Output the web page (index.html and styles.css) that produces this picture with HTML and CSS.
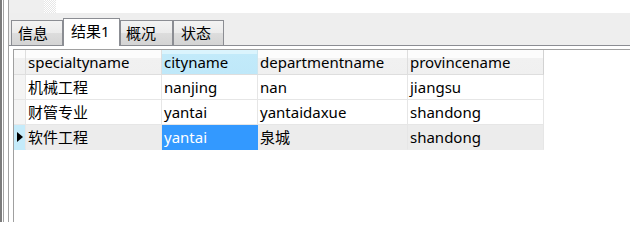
FILE: index.html
```html
<!DOCTYPE html>
<html>
<head>
<meta charset="utf-8">
<link rel="stylesheet" href="styles.css">
</head>
<body>
<div class="frame">
  <div class="rail rail-dark"></div>
  <div class="rail-gap"></div>
  <div class="rail rail-light"></div>
  <div class="rail-gap2"></div>
  <div class="rail rail-light"></div>
  <div class="main">
    <div class="topstrip"><div class="topbox"></div><div class="checker"></div></div>
    <div class="tabbar">
      <div class="tab w1">信息</div>
      <div class="tab active w2">结果1</div>
      <div class="tab w3">概况</div>
      <div class="tab w4">状态</div>
    </div>
    <div class="spacer"></div>
    <div class="gridwrap">
      <div class="grid">
        <div class="row head">
          <div class="cell ind"></div>
          <div class="cell c1">specialtyname</div>
          <div class="cell c2 hsel">cityname</div>
          <div class="cell c3">departmentname</div>
          <div class="cell c4">provincename</div>
        </div>
        <div class="row">
          <div class="cell ind"></div>
          <div class="cell c1">机械工程</div>
          <div class="cell c2">nanjing</div>
          <div class="cell c3">nan</div>
          <div class="cell c4">jiangsu</div>
        </div>
        <div class="row">
          <div class="cell ind"></div>
          <div class="cell c1">财管专业</div>
          <div class="cell c2">yantai</div>
          <div class="cell c3">yantaidaxue</div>
          <div class="cell c4">shandong</div>
        </div>
        <div class="row current">
          <div class="cell ind cur"><span class="arrow"></span></div>
          <div class="cell c1">软件工程</div>
          <div class="cell c2 sel">yantai</div>
          <div class="cell c3">泉城</div>
          <div class="cell c4">shandong</div>
        </div>
      </div>
    </div>
  </div>
</div>
</body>
</html>
```

FILE: styles.css
```css
html, body {
  margin: 0;
  padding: 0;
  background: #ffffff;
}
body {
  font-family: "Noto Sans", "Noto Sans CJK SC", sans-serif;
  font-size: 15px;
  color: #000;
}
.frame {
  display: flex;
  height: 222px;
  width: 630px;
  overflow: hidden;
}
.rail { flex: 0 0 auto; }
.rail-dark { width: 2px; background: #7b7b7b; }
.rail-gap { width: 1px; }
.rail-light { width: 1px; background: #a3a3a3; }
.rail-gap2 { width: 4px; }
.main {
  flex: 1;
  display: flex;
  flex-direction: column;
  min-width: 0;
}
.topstrip {
  height: 13px;
  display: flex;
}
.topbox { width: 35px; background: #efefef; }
.checker {
  width: 12px;
  background: repeating-conic-gradient(#e6e6e6 0 25%, #ffffff 0 50%) 0 0 / 2px 2px;
}
.tabbar {
  height: 32px;
  background: #eeeeee;
  border-bottom: 1px solid #8b8d93;
  display: flex;
  align-items: flex-end;
  padding-left: 2px;
}
.tab {
  box-sizing: border-box;
  height: 25px;
  border: 1px solid #8b8d93;
  border-bottom: none;
  padding-left: 6px;
  line-height: 24px;
  background: linear-gradient(#f3f3f3, #ebebeb 50%, #dddddd 50%, #d4d4d4);
  white-space: nowrap;
}
.tab.active {
  height: 28px;
  margin-bottom: -1px;
  background: #ffffff;
  line-height: 25px;
  padding-left: 7px;
  position: relative;
}
.w1 { width: 52px; }
.w2 { width: 57px; }
.w3 { width: 53px; padding-left: 5px; }
.w4 { width: 51px; padding-left: 7px; }
.spacer { height: 3px; }
.gridwrap {
  flex: 1;
  padding-left: 4px;
  display: flex;
}
.grid {
  flex: 1;
  border-top: 1px solid #a0a0a0;
  border-left: 1px solid #a0a0a0;
  background: #ffffff;
}
.row {
  display: flex;
  height: 25px;
}
.cell {
  box-sizing: border-box;
  height: 25px;
  border-right: 1px solid #e6e6e6;
  border-bottom: 1px solid #e6e6e6;
  padding-left: 2px;
  line-height: 24px;
  white-space: nowrap;
  overflow: hidden;
}
.ind { width: 12px; padding: 0; background: #f4f4f4; }
.c1 { width: 136px; }
.c2 { width: 96px; }
.c3 { width: 150px; }
.c4 { width: 136px; }
.head .cell {
  background: linear-gradient(#fcfcfc 0, #fcfcfc 8px, #f1f1f1 8px, #f0f0f0);
  border-right-color: #dedede;
  border-bottom-color: #dedede;
}
.head .cell.hsel {
  background: linear-gradient(#dbf4fd 0, #dbf4fd 4px, #c2eafa 4px, #bfe8f9);
  border-right-color: #cce6f0;
}
.head .c4 { border-right-color: #d2d2d2; }
.current .cell {
  background: #ececec;
  border-bottom-color: #ececec;
}
.current .cell.cur {
  background: #c5ebfa;
  border-bottom-color: #c5ebfa;
  display: flex;
  align-items: center;
  padding-left: 3px;
}
.current .cell.sel {
  background: #3399ff;
  border-right-color: #3399ff;
  border-bottom-color: #3399ff;
  color: #ffffff;
}
.arrow {
  width: 0;
  height: 0;
  border-left: 6px solid #000;
  border-top: 5px solid transparent;
  border-bottom: 5px solid transparent;
}
```
